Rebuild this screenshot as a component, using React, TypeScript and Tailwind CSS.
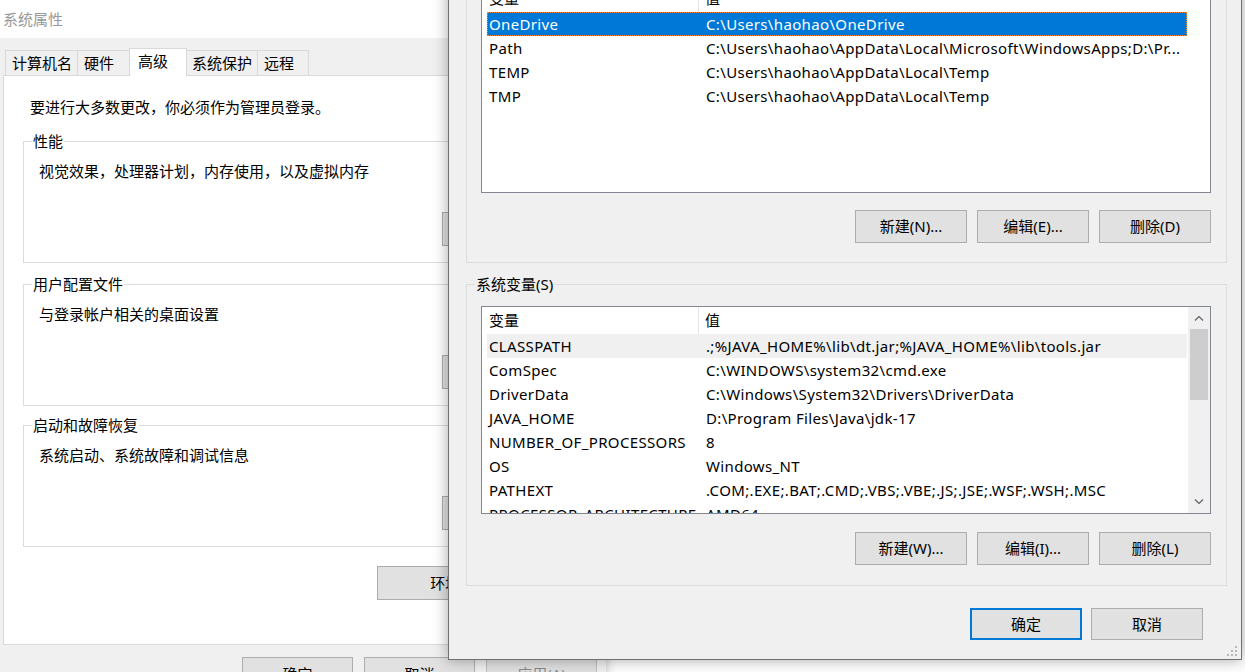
import React from 'react';

const font = "font-['Noto_Sans','Noto_Sans_CJK_SC',sans-serif]";

interface Row {
  name: string;
  value: string;
}

const userVars: Row[] = [
  { name: 'OneDrive', value: 'C:\\Users\\haohao\\OneDrive' },
  { name: 'Path', value: 'C:\\Users\\haohao\\AppData\\Local\\Microsoft\\WindowsApps;D:\\Pr...' },
  { name: 'TEMP', value: 'C:\\Users\\haohao\\AppData\\Local\\Temp' },
  { name: 'TMP', value: 'C:\\Users\\haohao\\AppData\\Local\\Temp' },
];

const systemVars: Row[] = [
  { name: 'CLASSPATH', value: '.;%JAVA_HOME%\\lib\\dt.jar;%JAVA_HOME%\\lib\\tools.jar' },
  { name: 'ComSpec', value: 'C:\\WINDOWS\\system32\\cmd.exe' },
  { name: 'DriverData', value: 'C:\\Windows\\System32\\Drivers\\DriverData' },
  { name: 'JAVA_HOME', value: 'D:\\Program Files\\Java\\jdk-17' },
  { name: 'NUMBER_OF_PROCESSORS', value: '8' },
  { name: 'OS', value: 'Windows_NT' },
  { name: 'PATHEXT', value: '.COM;.EXE;.BAT;.CMD;.VBS;.VBE;.JS;.JSE;.WSF;.WSH;.MSC' },
  { name: 'PROCESSOR_ARCHITECTURE', value: 'AMD64' },
];

const Btn: React.FC<{
  children: React.ReactNode;
  className?: string;
  primary?: boolean;
  disabled?: boolean;
}> = ({ children, className = '', primary = false, disabled = false }) => (
  <div
    className={`flex items-center justify-center shrink-0 bg-[#e1e1e1] text-[15px] leading-none
      ${primary ? 'border-2 border-[#0078d7]' : 'border border-[#adadad]'}
      ${disabled ? 'text-[#8a8a8a] bg-[#cccccc] border-[#bfbfbf]' : 'text-black'}
      ${className}`}
  >
    {children}
  </div>
);

const GroupLabel: React.FC<{ children: React.ReactNode; bg: string }> = ({ children, bg }) => (
  <span
    className={`absolute left-[8px] top-[-12px] px-[1px] leading-[22px] text-[15px] text-black ${bg}`}
  >
    {children}
  </span>
);

const VarList: React.FC<{
  rows: Row[];
  className?: string;
  selected?: number;
  hovered?: number;
  scroll?: boolean;
}> = ({ rows, className = '', selected = -1, hovered = -1, scroll = false }) => (
  <div className={`flex bg-white border border-[#828790] overflow-hidden text-[15px] text-black ${className}`}>
    <div className="flex-1 min-w-0 flex flex-col">
      {/* Header */}
      <div className="flex h-[27px] shrink-0 items-center">
        <div className="w-[217px] h-full pl-[7px] flex items-center border-r border-[#e5e5e5]">变量</div>
        <div className="pl-[6px]">值</div>
      </div>
      <div className="pl-[5px] flex flex-col">
        {rows.map((row, i) => (
          <div
            key={row.name}
            className={`flex items-center h-[24px] w-[700px] shrink-0 whitespace-nowrap tracking-[0.35px]
              ${i === selected ? 'bg-[#0078d7] text-white outline-1 outline-dotted outline-[#ff8728] -outline-offset-1' : ''}
              ${i === hovered ? 'bg-[#f0f0f0]' : ''}`}
          >
            <div className="w-[212px] pl-[2px] shrink-0">{row.name}</div>
            <div className="pl-[7px]">{row.value}</div>
          </div>
        ))}
      </div>
    </div>
    {scroll && (
      <div className="w-[22px] shrink-0 bg-[#f0f0f0] flex flex-col items-center">
        <div className="h-[22px] w-full flex items-center justify-center">
          <svg width="10" height="6" viewBox="0 0 10 6" fill="none" stroke="#606060" strokeWidth="1.2">
            <path d="M1 5.5 L5 1.5 L9 5.5" />
          </svg>
        </div>
        <div className="w-[18px] h-[71px] bg-[#cdcdcd]" />
        <div className="flex-1" />
        <div className="h-[22px] w-full flex items-center justify-center">
          <svg width="10" height="6" viewBox="0 0 10 6" fill="none" stroke="#606060" strokeWidth="1.2">
            <path d="M1 0.5 L5 4.5 L9 0.5" />
          </svg>
        </div>
      </div>
    )}
  </div>
);

const SettingGroup: React.FC<{ title: string; text: string; className?: string }> = ({
  title,
  text,
  className = '',
}) => (
  <div className={`relative h-[122px] w-[554px] border border-[#dcdcdc] flex flex-col pl-[15px] pr-[22px] pt-[19px] ${className}`}>
    <GroupLabel bg="bg-white">{title}</GroupLabel>
    <div className="leading-[20px] text-[15px] text-black">{text}</div>
    <Btn className="self-end mt-[31px] w-[112px] h-[34px]">设置(S)...</Btn>
  </div>
);

const SystemProperties: React.FC = () => (
  <div className="absolute left-0 top-0 w-[606px] h-[720px] bg-[#f0f0f0] shadow-[0_0_10px_rgba(0,0,0,0.25)] flex flex-col">
    {/* Title bar */}
    <div className="h-[38px] bg-white flex items-center pl-[3px] text-[15px] text-[#999999]">系统属性</div>

    {/* Tabs */}
    <div className="flex items-end pl-[5px] pt-[10px] text-[15px] text-black">
      <div className="w-[72px] h-[25px] pl-[6px] flex items-center bg-[#f0f0f0] border-t border-l border-[#d9d9d9]">计算机名</div>
      <div className="w-[52px] h-[25px] pl-[6px] flex items-center bg-[#f0f0f0] border-t border-l border-[#d9d9d9]">硬件</div>
      <div className="w-[58px] h-[28px] pl-[8px] flex items-center bg-white border-t border-l border-r border-[#d9d9d9] relative z-10 -mb-px pb-[3px]">高级</div>
      <div className="w-[70px] h-[25px] pl-[5px] flex items-center bg-[#f0f0f0] border-t border-[#d9d9d9]">系统保护</div>
      <div className="w-[52px] h-[25px] pl-[6px] flex items-center bg-[#f0f0f0] border-t border-l border-r border-[#d9d9d9]">远程</div>
    </div>

    {/* Tab panel */}
    <div className="ml-[3px] w-[595px] h-[570px] bg-white border border-[#d9d9d9] flex flex-col pl-[19px] shrink-0">
      <div className="pl-[7px] pt-[21px] leading-[20px] text-[15px] text-black">要进行大多数更改，你必须作为管理员登录。</div>
      <SettingGroup className="mt-[24px]" title="性能" text="视觉效果，处理器计划，内存使用，以及虚拟内存" />
      <SettingGroup className="mt-[21px]" title="用户配置文件" text="与登录帐户相关的桌面设置" />
      <SettingGroup className="mt-[19px]" title="启动和故障恢复" text="系统启动、系统故障和调试信息" />
      <Btn className="ml-[354px] mt-[19px] w-[199px] h-[34px]">环境变量(N)...</Btn>
    </div>

    {/* Footer buttons */}
    <div className="flex gap-[11px] pl-[242px] pt-[12px]">
      <Btn className="w-[111px] h-[34px]">确定</Btn>
      <Btn className="w-[111px] h-[34px]">取消</Btn>
      <Btn disabled className="w-[111px] h-[34px]">应用(A)</Btn>
    </div>
  </div>
);

const EnvironmentVariables: React.FC = () => (
  <div className="absolute left-[448px] top-[-80px] w-[794px] h-[740px] bg-[#f0f0f0] border border-[#707070] shadow-[0_0_14px_rgba(0,0,0,0.35)] flex flex-col pl-[17px] text-[15px] text-black">
    {/* User variables */}
    <div className="relative mt-[34px] w-[761px] border border-[#dcdcdc] flex flex-col pl-[14px] pt-[28px] pb-[19px]">
      <GroupLabel bg="bg-[#f0f0f0]">haohao 的用户变量(U)</GroupLabel>
      <VarList className="w-[730px] h-[209px]" rows={userVars} selected={0} />
      <div className="flex gap-[10px] justify-end w-[730px] mt-[17px]">
        <Btn className="w-[112px] h-[33px]">新建(N)...</Btn>
        <Btn className="w-[112px] h-[33px]">编辑(E)...</Btn>
        <Btn className="w-[112px] h-[33px]">删除(D)</Btn>
      </div>
    </div>

    {/* System variables */}
    <div className="relative mt-[21px] w-[761px] border border-[#dcdcdc] flex flex-col pl-[14px] pt-[21px] pb-[20px]">
      <GroupLabel bg="bg-[#f0f0f0]">系统变量(S)</GroupLabel>
      <VarList className="w-[730px] h-[208px]" rows={systemVars} hovered={0} scroll />
      <div className="flex gap-[10px] justify-end w-[730px] mt-[18px]">
        <Btn className="w-[112px] h-[33px]">新建(W)...</Btn>
        <Btn className="w-[112px] h-[33px]">编辑(I)...</Btn>
        <Btn className="w-[112px] h-[33px]">删除(L)</Btn>
      </div>
    </div>

    {/* Dialog buttons */}
    <div className="flex gap-[9px] pl-[504px] mt-[22px]">
      <Btn primary className="w-[112px] h-[32px]">确定</Btn>
      <Btn className="w-[112px] h-[32px]">取消</Btn>
    </div>

    {/* Resize grip */}
    <svg className="absolute right-[4px] bottom-[3px]" width="10" height="10" viewBox="0 0 10 10" fill="#b9b9b9">
      <rect x="8" y="0" width="2" height="2" />
      <rect x="4" y="4" width="2" height="2" />
      <rect x="8" y="4" width="2" height="2" />
      <rect x="0" y="8" width="2" height="2" />
      <rect x="4" y="8" width="2" height="2" />
      <rect x="8" y="8" width="2" height="2" />
    </svg>
  </div>
);

export default function App() {
  return (
    <div className={`relative w-[1245px] h-[672px] overflow-hidden bg-white ${font}`}>
      <SystemProperties />
      <EnvironmentVariables />
    </div>
  );
}
